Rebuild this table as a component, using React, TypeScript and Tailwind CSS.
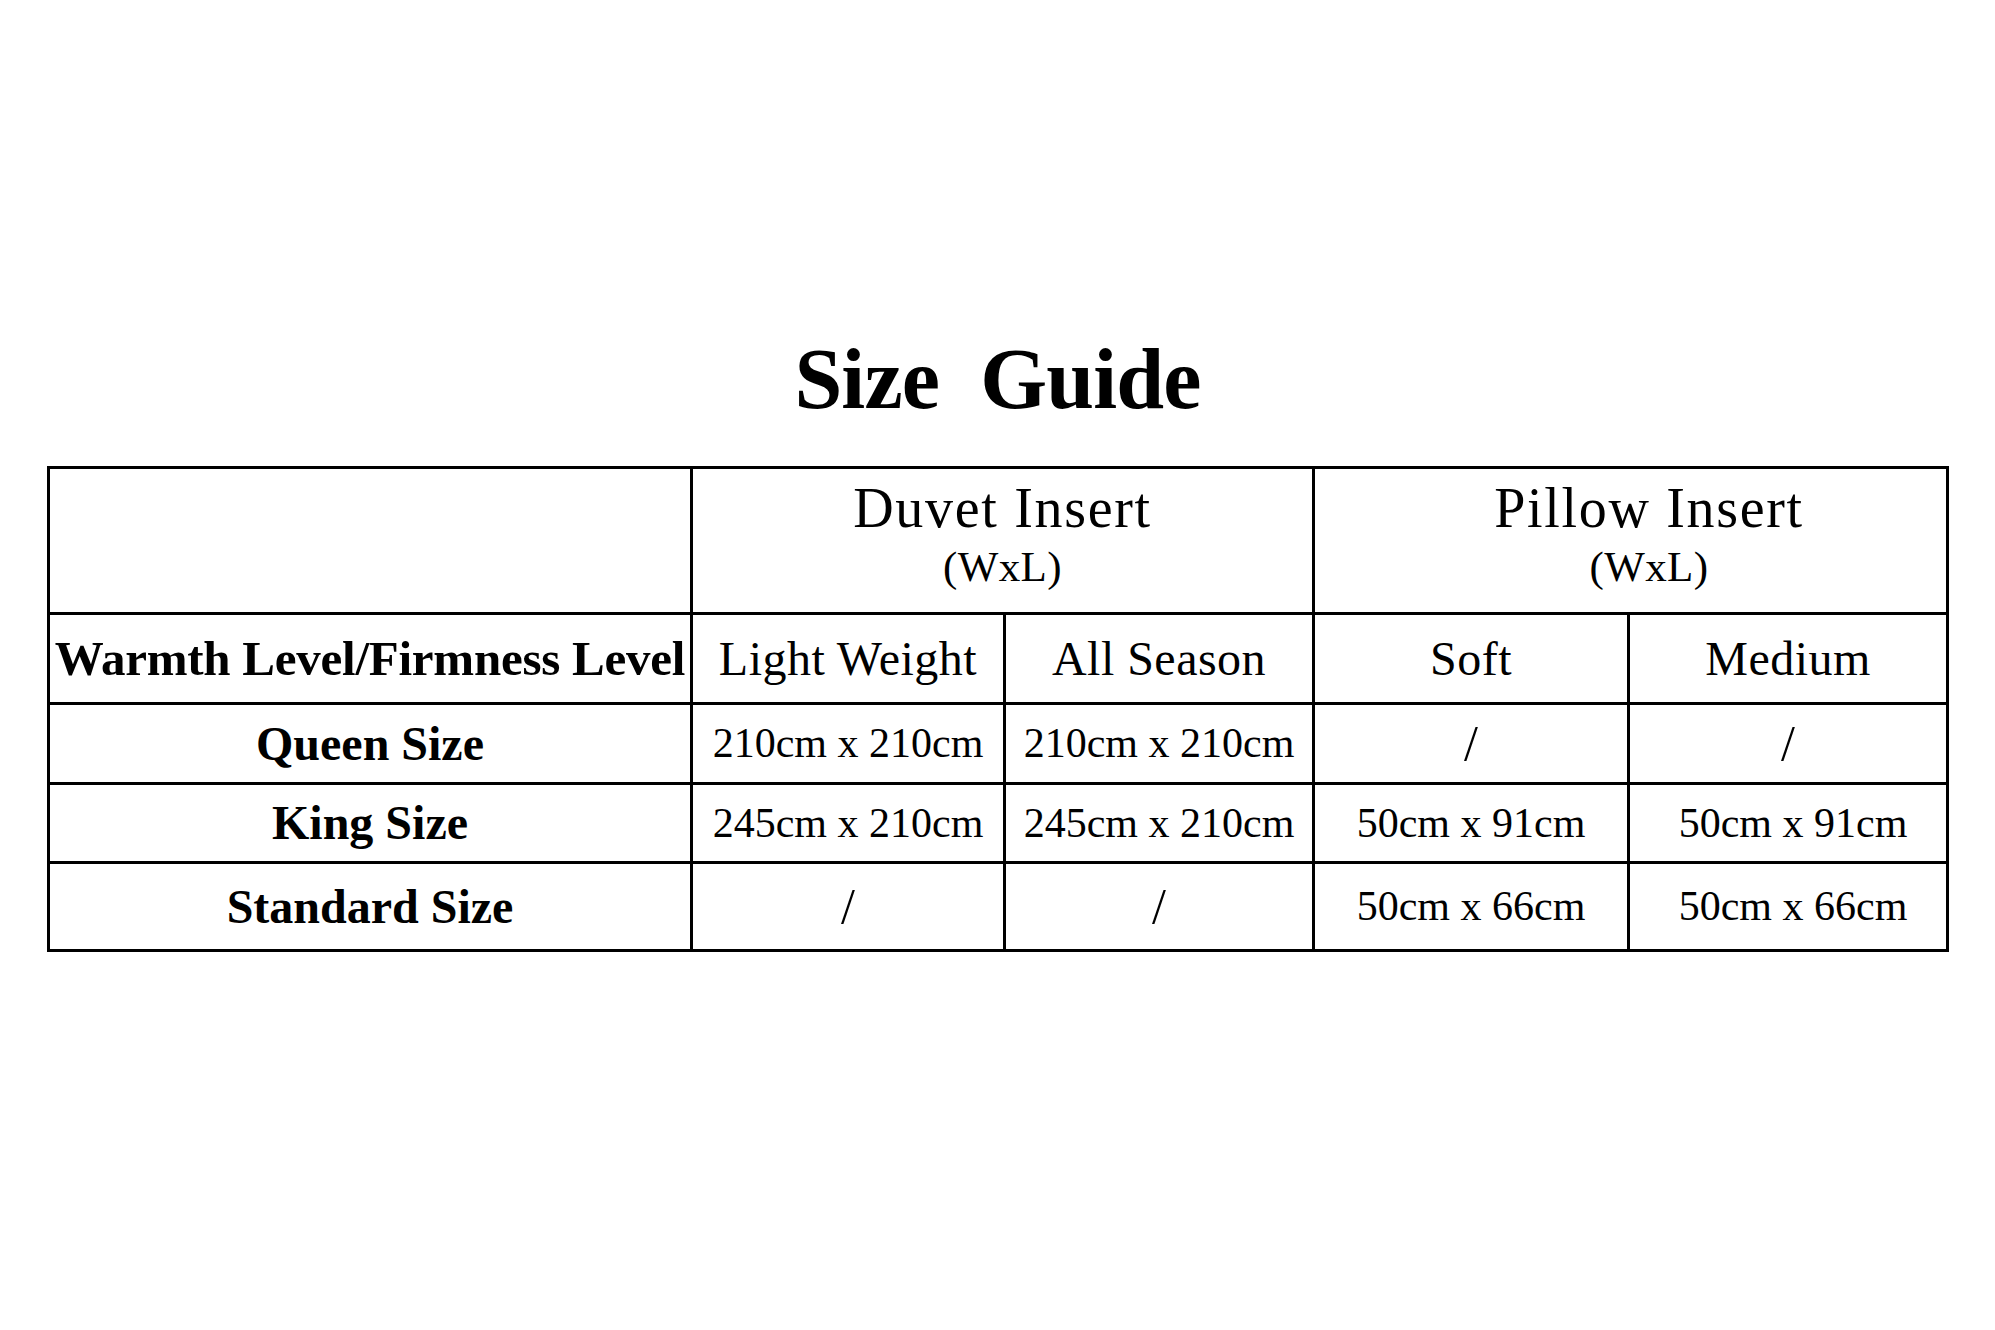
import React from 'react';

const serif = { fontFamily: '"Liberation Serif", "Times New Roman", serif' };

const rows = [
  { label: 'Queen Size', cells: ['210cm x 210cm', '210cm x 210cm', '/', '/'], h: 'h-[80px]' },
  { label: 'King Size', cells: ['245cm x 210cm', '245cm x 210cm', '50cm x 91cm', '50cm x 91cm'], h: 'h-[79px]' },
  { label: 'Standard Size', cells: ['/', '/', '50cm x 66cm', '50cm x 66cm'], h: 'h-[88px]' },
];

const cell = 'border-[3px] border-black text-center align-middle p-0';

export default function App() {
  return (
    <div className="min-h-screen w-full bg-white text-black" style={serif}>
      <div className="pt-[336px]">
        <h1 className="text-center text-[86px] leading-none font-bold tracking-[-0.01em]">
          Size&nbsp; Guide
        </h1>
      </div>

      <div className="pl-[47px] pt-[44px]">
        <table className="w-[1902px] table-fixed border-collapse">
          <colgroup>
            <col className="w-[643px]" />
            <col className="w-[313px]" />
            <col className="w-[309px]" />
            <col className="w-[315px]" />
            <col />
          </colgroup>
          <tbody>
            {/* Product headers */}
            <tr className="h-[146px]">
              <td className={cell}></td>
              <td colSpan={2} className={`${cell} pb-[14px]`}>
                <div className="text-[56px] leading-none tracking-[0.03em]">Duvet Insert</div>
                <div className="text-[43px] leading-none mt-[9px] tracking-[0.01em]">(WxL)</div>
              </td>
              <td colSpan={2} className={`${cell} pb-[14px] pl-[37px]`}>
                <div className="text-[56px] leading-none tracking-[0.03em]">Pillow Insert</div>
                <div className="text-[43px] leading-none mt-[9px] tracking-[0.01em]">(WxL)</div>
              </td>
            </tr>

            {/* Levels */}
            <tr className="h-[90px]">
              <td className={`${cell} font-bold text-[49px] whitespace-nowrap tracking-[-0.005em]`}>
                Warmth Level/Firmness Level
              </td>
              {['Light Weight', 'All Season', 'Soft', 'Medium'].map((t) => (
                <td key={t} className={`${cell} text-[48px] tracking-[0.01em]`}>
                  {t}
                </td>
              ))}
            </tr>

            {rows.map((r) => (
              <tr key={r.label} className={r.h}>
                <td className={`${cell} font-bold text-[48px]`}>{r.label}</td>
                {r.cells.map((c, i) => (
                  <td
                    key={i}
                    className={`${cell} whitespace-nowrap ${c === '/' ? 'text-[50px] font-light' : 'text-[42px]'} ${i === 3 && c !== '/' ? 'pl-[10px]' : ''}`}
                  >
                    {c}
                  </td>
                ))}
              </tr>
            ))}
          </tbody>
        </table>
      </div>
    </div>
  );
}
